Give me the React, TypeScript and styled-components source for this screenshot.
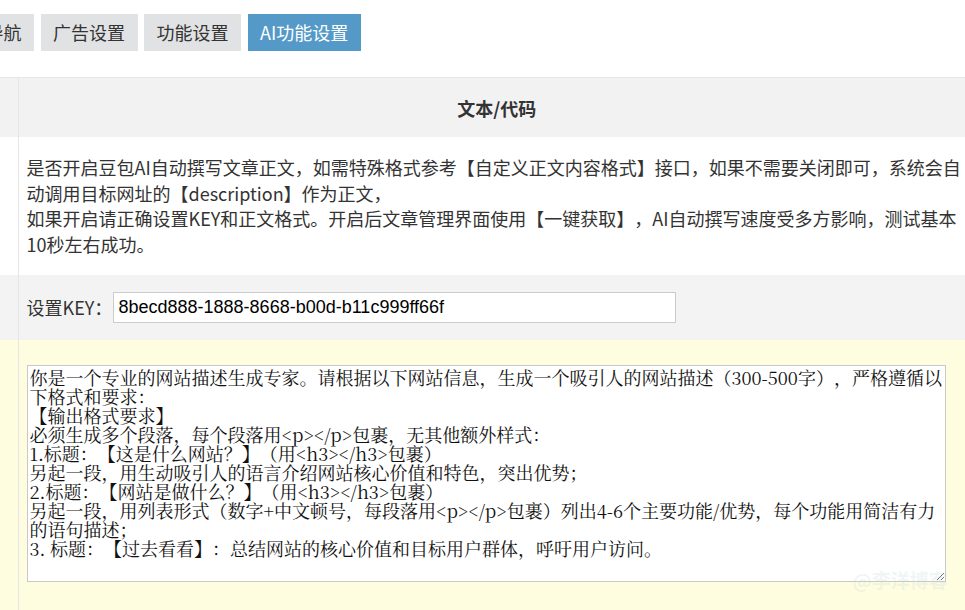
import React from 'react';
import styled, { createGlobalStyle } from 'styled-components';

const TABS = [
  { title: '网址导航', active: false },
  { title: '广告设置', active: false },
  { title: '功能设置', active: false },
  { title: 'AI功能设置', active: true },
];

const PROMPT = [
  '你是一个专业的网站描述生成专家。请根据以下网站信息，生成一个吸引人的网站描述（300-500字），严格遵循以下格式和要求：',
  '【输出格式要求】',
  '必须生成多个段落，每个段落用<p></p>包裹，无其他额外样式：',
  '1.标题：【这是什么网站？】（用<h3></h3>包裹）',
  '另起一段，用生动吸引人的语言介绍网站核心价值和特色，突出优势；',
  '2.标题：【网站是做什么？】（用<h3></h3>包裹）',
  '另起一段，用列表形式（数字+中文顿号，每段落用<p></p>包裹）列出4-6个主要功能/优势，每个功能用简洁有力的语句描述；',
  '3. 标题：【过去看看】：总结网站的核心价值和目标用户群体，呼吁用户访问。',
].join('\n');

const GlobalStyle = createGlobalStyle`
  * {
    text-spacing-trim: space-all;
  }

  body {
    margin: 0;
    overflow: hidden;
    background: #fff;
    color: #333;
    font-family: "Noto Sans CJK SC", "Noto Sans", sans-serif;
  }
`;

export default function App() {
  return (
    <>
      <GlobalStyle />
      {/* the page is scrolled sideways in the capture, so it starts left of the window */}
      <Page>
        <TabBar>
          {TABS.map((tab) => (
            <Tab key={tab.title} active={tab.active}>
              {tab.title}
            </Tab>
          ))}
        </TabBar>

        <Table>
          <colgroup>
            <col style={{ width: 81 }} />
            <col />
          </colgroup>
          <tbody>
            <Row tone="head">
              <LabelCell />
              <HeadCell>文本/代码</HeadCell>
            </Row>
            <Row tone="plain">
              <LabelCell />
              <TextCell>
                是否开启豆包AI自动撰写文章正文，如需特殊格式参考【自定义正文内容格式】接口，如果不需要关闭即可，系统会自动调用目标网址的【description】作为正文，
                <br />
                如果开启请正确设置KEY和正文格式。开启后文章管理界面使用【一键获取】，AI自动撰写速度受多方影响，测试基本10秒左右成功。
              </TextCell>
            </Row>
            <Row tone="grey">
              <LabelCell />
              <KeyCell>
                <KeyField>
                  <span>设置KEY：</span>
                  <KeyInput defaultValue="8becd888-1888-8668-b00d-b11c999ff66f" />
                </KeyField>
              </KeyCell>
            </Row>
            <Row tone="yellow">
              <LabelCell />
              <PromptCell>
                <PromptArea defaultValue={PROMPT} spellCheck={false} />
                <Watermark>@李洋博客</Watermark>
              </PromptCell>
            </Row>
          </tbody>
        </Table>
      </Page>
    </>
  );
}

const Page = styled.div`
  margin-left: -63px;
  width: 1038px;
  padding-top: 14px;
`;

const TabBar = styled.div`
  display: flex;
  gap: 6.5px;
`;

const Tab = styled.div<{ active: boolean }>`
  height: 37px;
  line-height: 37px;
  padding: 0 12.5px;
  font-size: 18px;
  background: ${(p) => (p.active ? '#5499c7' : '#e1e2e4')};
  color: ${(p) => (p.active ? '#fff' : '#333')};
  cursor: pointer;
`;

const Table = styled.table`
  margin-top: 26px;
  width: 100%;
  border-collapse: collapse;
  table-layout: fixed;
  border-top: 1px solid #e6e6e6;
`;

const ROW_BG = {
  head: '#f2f2f2',
  plain: '#ffffff',
  grey: '#f3f3f3',
  yellow: '#fffddf',
};

const Row = styled.tr<{ tone: keyof typeof ROW_BG }>`
  background: ${(p) => ROW_BG[p.tone]};
`;

const LabelCell = styled.td`
  border-right: 1px solid #e6e6e6;
  padding: 0;
`;

const HeadCell = styled.th`
  height: 59px;
  padding: 0 8px;
  font-size: 18px;
  font-weight: 700;
  color: #333;
  text-align: center;
`;

const TextCell = styled.td`
  padding: 18px 8px 17px;
  font-size: 18px;
  line-height: 1.428571;
  color: #333;
  vertical-align: top;
`;

const KeyCell = styled.td`
  height: 65px;
  padding: 0 8px;
`;

const KeyField = styled.label`
  display: flex;
  align-items: center;
  font-size: 18px;
  color: #333;

  span {
    width: 86px;
  }
`;

const KeyInput = styled.input`
  box-sizing: border-box;
  width: 563px;
  height: 31px;
  padding: 0 5px;
  border: 1px solid #cccccc;
  background: #fff;
  font-family: "Liberation Sans", Arial, sans-serif;
  font-size: 18px;
  color: #000;
  outline: none;
`;

const PromptCell = styled.td`
  position: relative;
  padding: 25px 8px 40px;
  vertical-align: top;
`;

const PromptArea = styled.textarea`
  display: block;
  box-sizing: border-box;
  width: 919px;
  height: 217px;
  margin: 0;
  padding: 2px;
  border: 1px solid #c8c8c8;
  background: #fff;
  font-family: "Noto Serif CJK SC", "Noto Sans CJK SC", serif;
  font-size: 18px;
  line-height: 19px;
  color: #111;
  outline: none;
`;

const Watermark = styled.div`
  position: absolute;
  top: 226px;
  left: 834px;
  font-size: 19px;
  font-weight: 700;
  color: rgba(190, 210, 215, 0.22);
  pointer-events: none;
  white-space: nowrap;
`;
